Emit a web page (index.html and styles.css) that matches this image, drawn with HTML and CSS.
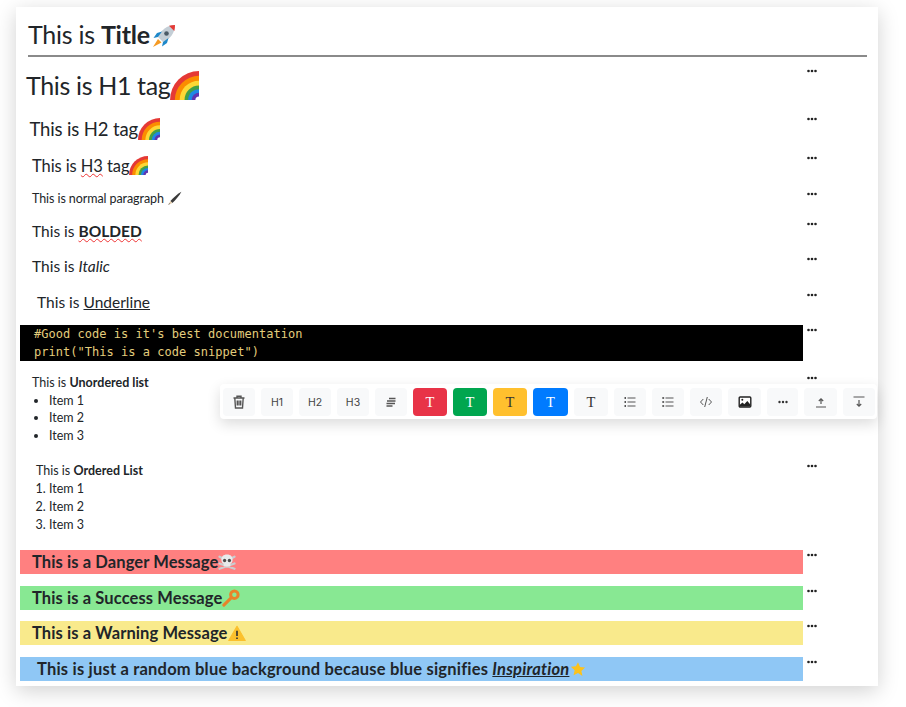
FILE: index.html
```html
<!DOCTYPE html>
<html>
<head>
	<title>Editor</title>
	<link rel="stylesheet" href="styles.css">
</head>
<body>
	<svg class="defs" viewBox="0 0 24 24">
		<symbol id="rainbow" viewBox="0 0 24 24">
			<path d="M0 24A24 24 0 0 1 24 0V24z" fill="#e53935"/>
			<path d="M4 24A20 20 0 0 1 24 4V24z" fill="#fb8c00"/>
			<path d="M8 24A16 16 0 0 1 24 8V24z" fill="#fdd835"/>
			<path d="M12 24A12 12 0 0 1 24 12V24z" fill="#43a047"/>
			<path d="M15 24A9 9 0 0 1 24 15V24z" fill="#1e88e5"/>
			<path d="M18 24A6 6 0 0 1 24 18V24z" fill="#5e35b1"/>
			<path d="M21 24A3 3 0 0 1 24 21V24z" fill="#fff"/>
		</symbol>
		<symbol id="more" viewBox="0 0 10 4">
			<circle cx="1.500" cy="2" r="1.300" fill="#222"/>
			<circle cx="5" cy="2" r="1.300" fill="#222"/>
			<circle cx="8.500" cy="2" r="1.300" fill="#222"/>
		</symbol>
	</svg>

	<div class="card">
		<div class="title">This is <b>Title</b><svg class="emoji e-title" viewBox="0 0 24 24"><path d="M6 13C9 6 15 1 23 1c0 8-5 14-12 17z" fill="#c4ced6"/><path d="M17 1.700c2-.5 4-.7 6-.7 0 2-.2 4-.7 6z" fill="#e53935"/><circle cx="14.500" cy="9.500" r="2.300" fill="#4a5a66"/><path d="M6 13l-4.500 1L5 9l5-1.500zM11 18l-1 4.500 5-3.500 1.500-5z" fill="#1e88c9"/><path d="M6 15l3.500 3.500L1 23z" fill="#f59a23"/></svg></div>
		<hr class="rule">

		<div class="row row-h1"><div class="block h1">This is H1 tag<svg class="emoji e-h1"><use href="#rainbow"/></svg></div><svg class="dots"><use href="#more"/></svg></div>
		<div class="row row-h2"><div class="block h2">This is H2 tag<svg class="emoji e-h2"><use href="#rainbow"/></svg></div><svg class="dots"><use href="#more"/></svg></div>
		<div class="row row-h3"><div class="block h3">This is <span class="squiggle">H3</span> tag<svg class="emoji e-h3"><use href="#rainbow"/></svg></div><svg class="dots"><use href="#more"/></svg></div>
		<div class="row row-p"><div class="block para">This is normal paragraph <svg class="emoji e-p" viewBox="0 0 24 24"><path d="M23 1C17 4 10 11 5.500 16l3 3C14 14 20 7 23 1z" fill="#3a3a3a"/><path d="M5.500 16L2 22l6.500-3z" fill="#e0c9a8"/><path d="M3.500 19.500L2 22l2.500-1.200z" fill="#333"/></svg></div><svg class="dots"><use href="#more"/></svg></div>
		<div class="row row-b"><div class="block text">This is <b class="squiggle">BOLDED</b></div><svg class="dots"><use href="#more"/></svg></div>
		<div class="row row-b"><div class="block text">This is <i>Italic</i></div><svg class="dots"><use href="#more"/></svg></div>
		<div class="row row-b"><div class="block text indent">This is <u>Underline</u></div><svg class="dots"><use href="#more"/></svg></div>
		<div class="row row-code"><pre class="block code">#Good code is it's best documentation
print("This is a code snippet")</pre><svg class="dots"><use href="#more"/></svg></div>

		<div class="row row-list"><div class="block list">
			<div>This is <b>Unordered list</b></div>
			<ul><li>Item 1</li><li>Item 2</li><li>Item 3</li></ul>
		</div><svg class="dots"><use href="#more"/></svg></div>
		<div class="row row-list"><div class="block list list-o">
			<div>This is <b>Ordered List</b></div>
			<ol><li>Item 1</li><li>Item 2</li><li>Item 3</li></ol>
		</div><svg class="dots"><use href="#more"/></svg></div>

		<div class="row row-msg"><div class="block msg danger">This is a Danger Message<svg class="emoji e-msg" viewBox="0 0 24 24"><path d="M2 14l20 7M22 14L2 21M2 5l4 2M22 5l-4 2" stroke="#c9cdcf" stroke-width="3" stroke-linecap="round"/><path d="M12 2C7 2 4.500 5 4.500 9c0 3 1.500 4.500 3 5.500V18h9v-3.500c1.500-1 3-2.500 3-5.500 0-4-2.500-7-7.500-7z" fill="#e8eaeb"/><circle cx="8.800" cy="10" r="2.200" fill="#4a4a4a"/><circle cx="15.200" cy="10" r="2.200" fill="#4a4a4a"/></svg></div><svg class="dots"><use href="#more"/></svg></div>
		<div class="row row-msg"><div class="block msg success">This is a Success Message<svg class="emoji e-msg" viewBox="0 0 24 24"><circle cx="16.500" cy="7.500" r="5" fill="none" stroke="#e8832a" stroke-width="4"/><path d="M12.500 11.500L2.500 21.500" stroke="#e8832a" stroke-width="4" stroke-linecap="round"/></svg></div><svg class="dots"><use href="#more"/></svg></div>
		<div class="row row-msg"><div class="block msg warning">This is a Warning Message<svg class="emoji e-msg" viewBox="0 0 24 24"><path d="M12 3L23 22H1z" fill="#fbc02d" stroke="#fbc02d" stroke-width="1.500" stroke-linejoin="round"/><path d="M12 9v7M12 18v2" stroke="#333" stroke-width="2.200"/></svg></div><svg class="dots"><use href="#more"/></svg></div>
		<div class="row row-msg last"><div class="block msg info">This is just a random blue background because blue signifies <i><u>Inspiration</u></i><svg class="emoji e-msg" viewBox="0 0 24 24"><path d="M12 3l2.800 6.300 6.700.7-5 4.600 1.400 6.700L12 17.200l-5.900 3.100 1.400-6.700-5-4.600 6.700-.7z" fill="#fcc21b"/></svg></div><svg class="dots"><use href="#more"/></svg></div>

		<div class="toolbar">
			<span class="tbtn"><svg class="ico" viewBox="0 0 16 16"><path d="M2.500 4h11M6 4V2.300h4V4M3.800 4l.7 10h7l.7-10M6.300 6.500v5M8 6.500v5M9.700 6.500v5" fill="none" stroke="#555" stroke-width="1.400"/></svg></span>
			<span class="tbtn lab">H1</span>
			<span class="tbtn lab">H2</span>
			<span class="tbtn lab">H3</span>
			<span class="tbtn"><svg class="ico" viewBox="0 0 16 16"><path d="M6 4.500h6.500M4 7h8.500M3.500 9.500h8.500M3.500 12h6" fill="none" stroke="#555" stroke-width="1.300"/></svg></span>
			<span class="tbtn tee red">T</span>
			<span class="tbtn tee green">T</span>
			<span class="tbtn tee yellow">T</span>
			<span class="tbtn tee wide blue">T</span>
			<span class="tbtn tee plain">T</span>
			<span class="tbtn"><svg class="ico" viewBox="0 0 16 16"><path d="M5.500 4h8M5.500 8h8M5.500 12h8" fill="none" stroke="#555" stroke-width="1.200"/><path d="M2.500 3h1.500v2H2.500zM2.500 7h1.500v2H2.500zM2.500 11h1.500v2H2.500z" fill="#555"/></svg></span>
			<span class="tbtn"><svg class="ico" viewBox="0 0 16 16"><path d="M5.500 4h8M5.500 8h8M5.500 12h8" fill="none" stroke="#555" stroke-width="1.200"/><circle cx="3.200" cy="4" r="1.100" fill="#555"/><circle cx="3.200" cy="8" r="1.100" fill="#555"/><circle cx="3.200" cy="12" r="1.100" fill="#555"/></svg></span>
			<span class="tbtn"><svg class="ico" viewBox="0 0 16 16"><path d="M5.300 5L2.500 8l2.800 3M10.700 5l2.800 3-2.800 3M9.300 3L6.700 13" fill="none" stroke="#555" stroke-width="1"/></svg></span>
			<span class="tbtn btn-33"><svg class="ico" viewBox="0 0 16 16"><rect x="2.200" y="3" width="11.600" height="10" rx="1" fill="#fff" stroke="#222" stroke-width="1.400"/><circle cx="5.300" cy="5.800" r="1" fill="#222"/><path d="M2.500 12.500v-1.500l3-2.500 1.800 1.700 3-3.200 3 3.500v2z" fill="#222"/></svg></span>
			<span class="tbtn btn-31"><svg class="ico" viewBox="0 0 16 16"><circle cx="4.500" cy="8" r="1.200" fill="#333"/><circle cx="8" cy="8" r="1.200" fill="#333"/><circle cx="11.500" cy="8" r="1.200" fill="#333"/></svg></span>
			<span class="tbtn btn-33"><svg class="ico" viewBox="0 0 16 16"><path d="M8 10V5M5.800 7L8 4.800 10.200 7M3 13h10" fill="none" stroke="#555" stroke-width="1.200"/></svg></span>
			<span class="tbtn"><svg class="ico" viewBox="0 0 16 16"><path d="M2.500 3h11M8 6v6M5.800 10L8 12.200 10.200 10" fill="none" stroke="#555" stroke-width="1.200"/></svg></span>
		</div>
	</div>
</body>
</html>
```

FILE: styles.css
```css
* {
	box-sizing: border-box;
}
html, body {
	min-height: 707px;
}
body {
	margin: 0;
	padding-top: 7px;
	background: #fff;
	font-family: "Lato", "Noto Sans", sans-serif;
	color: #212529;
}
.defs {
	display: none;
}
.card {
	position: relative;
	width: 862px;
	height: 679px;
	margin: 0 0 0 16px;
	padding: 7px 4px 0 4px;
	background: #fff;
	box-shadow: 0 5px 20px rgba(0,0,0,0.18);
}
.title {
	height: 41px;
	margin-left: 8px;
	font-size: 25px;
	line-height: 41px;
	letter-spacing: -0.25px;
}
.rule {
	margin: 0 7px 0 8px;
	border: 0;
	border-top: 2px solid #8a8a8a;
	height: 2px;
}
.row {
	display: flex;
	align-items: flex-start;
}
.block {
	width: 783px;
	margin: 0;
	flex: none;
}
.dots {
	width: 10px;
	height: 4px;
	margin: 3px 0 0 4px;
	flex: none;
}
.row-h1 { height: 48px; margin-top: 9px; }
.row-h2 { height: 39px; }
.row-h3 { height: 36px; }
.row-p { height: 30px; }
.row-b { height: 35.330px; }
.row-code { height: 48px; }
.row-list { height: 88.500px; }
.row-msg { height: 35.670px; }
.row-msg.last { height: 24px; }
.h1 { font-size: 25px; line-height: 38px; padding-left: 6px; letter-spacing: -0.35px; }
.h2 { font-size: 18.500px; line-height: 30px; padding-left: 9.500px; letter-spacing: -0.15px; }
.h3 { font-size: 16.500px; line-height: 26px; padding-left: 12px; letter-spacing: -0.08px; }
.para { font-size: 12.500px; line-height: 20px; padding-left: 12px; letter-spacing: -0.08px; }
.text { font-size: 15.500px; line-height: 24px; padding-left: 12px; }
.indent { padding-left: 17px; }
.squiggle {
	text-decoration: underline wavy #e33;
	text-decoration-thickness: 1px;
}
.code {
	height: 36px;
	padding: 0 0 0 14px;
	background: #000;
	color: #e3cd7c;
	font-family: "DejaVu Sans Mono", monospace;
	font-size: 12px;
	line-height: 18px;
	letter-spacing: 0.03px;
}
.list {
	font-size: 12.500px;
	line-height: 17.700px;
	padding: 1px 0 0 12px;
}
.list-o {
	padding-left: 16px;
}
.list ul,
.list ol {
	margin: 0;
	padding: 0 0 0 17px;
}
.list-o ol {
	padding-left: 13px;
}
.msg {
	height: 24px;
	padding-left: 12px;
	font-size: 16.500px;
	font-weight: 700;
	line-height: 24px;
	letter-spacing: 0.1px;
	white-space: nowrap;
}
.danger { background: #ff8080; }
.success { background: #88e893; }
.warning { background: #f9ea8c; }
.info { background: #8fc7f5; padding-left: 17px; letter-spacing: 0.2px; }
.emoji {
	display: inline-block;
	vertical-align: -3px;
}
.e-title { width: 24px; height: 24px; margin-left: 2px; vertical-align: -4px; }
.e-h1 { width: 29px; height: 29px; vertical-align: -5px; }
.e-h2 { width: 22px; height: 22px; vertical-align: -4px; }
.e-h3 { width: 19px; height: 19px; }
.e-p { width: 15px; height: 15px; }
.e-msg { width: 18px; height: 18px; }
.toolbar {
	position: absolute;
	left: 204px;
	top: 377px;
	display: flex;
	gap: 6px;
	width: 657px;
	height: 35px;
	padding: 4px 2px 0 3px;
	background: #fff;
	border-radius: 4px;
	box-shadow: 0 5px 14px rgba(0,0,0,0.14);
}
.tbtn {
	display: flex;
	flex: none;
	align-items: center;
	justify-content: center;
	width: 32px;
	height: 28px;
	background: #f8f9fa;
	border-radius: 4px;
	color: #444;
}
.btn-33 { width: 33px; }
.btn-31 { width: 31px; }
.lab {
	font-family: "Inter", sans-serif;
	font-size: 10.500px;
}
.tee {
	width: 34px;
	font-family: "Liberation Serif", serif;
	font-size: 14.500px;
}
.wide { width: 35px; }
.red { background: #e83347; color: #fff; }
.green { background: #00a64f; color: #fff; }
.yellow { background: #ffc02e; color: #333; }
.blue { background: #007bff; color: #fff; }
.plain { color: #333; }
.ico {
	width: 16px;
	height: 16px;
}
```
